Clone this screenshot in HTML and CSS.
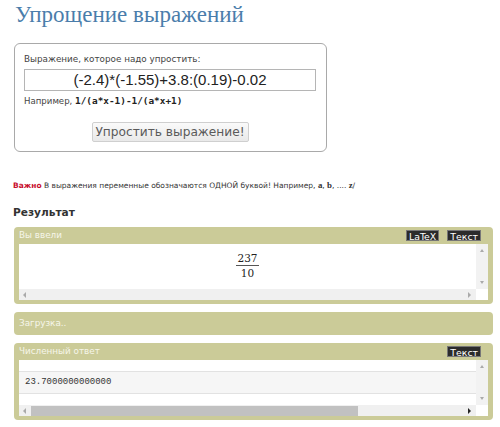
FILE: index.html
```html
<!DOCTYPE html>
<html lang="ru">
<head>
<meta charset="utf-8">
<link rel="stylesheet" href="styles.css">
</head>
<body>
<div class="page">
  <h1 class="title">Упрощение выражений</h1>
  <div class="form-box">
    <div class="label">Выражение, которое надо упростить:</div>
    <div class="input">(-2.4)*(-1.55)+3.8:(0.19)-0.02</div>
    <div class="note">Например, <b class="mono">1/(a*x-1)-1/(a*x+1)</b></div>
    <div class="btn-row"><button class="btn">Упростить выражение!</button></div>
  </div>
  <div class="important"><span class="red">Важно</span> В выражения переменные обозначаются ОДНОЙ буквой! Например, <b class="serifb">a</b>, <b class="serifb">b</b>, .... <b class="serifb">z</b>/</div>
  <div class="result-title">Результат</div>

  <div class="panel">
    <div class="panel-head">
      <span class="head-text">Вы ввели</span>
      <span class="tags"><span class="tag">LaTeX</span><span class="tag">Текст</span></span>
    </div>
    <div class="panel-body">
      <div class="scroll-main">
        <div class="view">
          <div class="frac"><span class="num">237</span><span class="den">10</span></div>
        </div>
        <div class="vbar"><span class="arr up"></span><span class="arr down"></span></div>
      </div>
      <div class="hrow">
        <div class="hbar"><span class="arr left"></span><span class="arr right"></span></div>
        <div class="corner"></div>
      </div>
    </div>
  </div>

  <div class="panel loading"><span class="head-text">Загрузка..</span></div>

  <div class="panel">
    <div class="panel-head">
      <span class="head-text">Численный ответ</span>
      <span class="tags"><span class="tag">Текст</span></span>
    </div>
    <div class="panel-body">
      <div class="scroll-main">
        <div class="view view2">
          <div class="pre">23.7000000000000</div>
        </div>
        <div class="vbar vbar2"><span class="arr up"></span><span class="arr down"></span></div>
      </div>
      <div class="hrow">
        <div class="hbar"><span class="arr left"></span><span class="thumb"></span><span class="arr right dark"></span></div>
        <div class="corner"></div>
      </div>
    </div>
  </div>
</div>
</body>
</html>
```
FILE: styles.css
```css
* { box-sizing: border-box; }
html, body { margin: 0; padding: 0; background: #fff; }
body { font-family: "DejaVu Sans", Verdana, sans-serif; color: #333; }
.page { width: 500px; height: 427px; padding: 0 7px 0 14px; overflow: hidden; }

.title {
  margin: 0;
  font-family: "Liberation Serif", "DejaVu Serif", serif;
  font-weight: normal;
  font-size: 23px;
  line-height: 30px;
  color: #4a7dab;
  padding-left: 1px;
}

.form-box {
  margin-top: 13px;
  width: 313px;
  height: 109px;
  border: 1px solid #a9a9a9;
  border-radius: 6px;
  padding: 9px 10px 0 9px;
}
.label { font-size: 8.8px; line-height: 12px; color: #444; }
.input {
  margin-top: 4px;
  height: 22px;
  border: 1px solid #b5b5b5;
  font-family: "Liberation Sans", Arial, sans-serif;
  font-size: 15px;
  line-height: 20px;
  text-align: center;
  color: #222;
}
.note { margin-top: 4px; font-size: 8.6px; line-height: 12px; color: #444; }
.mono { font-family: "DejaVu Sans Mono", monospace; font-size: 9.4px; color: #222; }
.btn-row { margin-top: 15px; display: flex; justify-content: center; }
.btn {
  width: 157px;
  height: 20px;
  border: 1px solid #cfcfcf;
  border-radius: 2px;
  background: linear-gradient(#fafafa, #e9e9e9);
  font-family: "DejaVu Sans", Verdana, sans-serif;
  font-size: 12.2px;
  color: #5a5a5a;
  padding: 0;
  line-height: 18px;
}

.important {
  margin-top: 28px;
  margin-left: -1px;
  font-size: 7.5px;
  line-height: 10px;
  color: #333;
}
.red { color: #c8102e; font-weight: bold; }
.serifb { font-family: "Liberation Serif", serif; font-size: 8.8px; }
.result-title {
  margin-top: 14px;
  margin-left: -1px;
  font-weight: bold;
  font-size: 10.6px;
  line-height: 14px;
  color: #333;
}

.panel {
  margin-top: 8px;
  width: 479px;
  background: #cbcb98;
  border-radius: 4px;
  padding: 0 5px 4px 5px;
}
.panel-head {
  height: 17px;
  display: flex;
  justify-content: space-between;
  align-items: flex-start;
  padding-right: 7px;
}
.head-text {
  font-size: 8.8px;
  line-height: 17px;
  color: #f6f6ea;
}
.tags { display: flex; gap: 8px; padding-top: 3px; }
.tag {
  background: #2b2b2b;
  color: #fff;
  font-size: 9.4px;
  line-height: 9px;
  height: 11px;
  padding: 1px 2px;
  border: 1px solid #777;
}
.panel-body { background: #fff; }
.scroll-main { display: flex; }
.view { flex: 1; height: 45px; display: flex; justify-content: center; align-items: flex-start; }
.frac {
  display: flex; flex-direction: column; align-items: center;
  font-family: "DejaVu Serif", "Liberation Serif", serif;
  font-size: 10.5px;
  color: #222;
  margin-top: 8px;
}
.num { line-height: 12px; padding: 0 1px 1px; border-bottom: 1px solid #555; }
.den { line-height: 12px; padding-top: 1px; }

.vbar { width: 12px; background: #f2f2f2; position: relative; }
.hrow { display: flex; height: 11px; }
.hbar { flex: 1; background: #f0f0f0; position: relative; }
.corner { width: 12px; background: #fff; }

.arr { position: absolute; width: 0; height: 0; }
.arr.up { top: 5px; left: 4px; border-left: 2px solid transparent; border-right: 2px solid transparent; border-bottom: 3px solid #aaa; }
.arr.down { bottom: 5px; left: 4px; border-left: 2px solid transparent; border-right: 2px solid transparent; border-top: 3px solid #aaa; }
.arr.left { left: 4px; top: 3px; border-top: 3px solid transparent; border-bottom: 3px solid transparent; border-right: 3px solid #aaa; }
.arr.right { right: 5px; top: 3px; border-top: 3px solid transparent; border-bottom: 3px solid transparent; border-left: 3px solid #aaa; }
.arr.right.dark { border-left-color: #222; }

.loading { height: 23px; padding: 0 5px; display: flex; align-items: center; }

.view2 { height: 45px; display: block; padding-top: 11px; }
.pre {
  height: 23px;
  background: #f6f6f6;
  border-top: 1px solid #e2e2e2;
  border-bottom: 1px solid #e2e2e2;
  font-family: "Liberation Mono", "Courier New", monospace;
  font-size: 9px;
  line-height: 21px;
  padding-left: 6px;
  color: #333;
}
.thumb { position: absolute; left: 12px; top: 1px; width: 327px; height: 10px; background: #c1c1c1; }
```
